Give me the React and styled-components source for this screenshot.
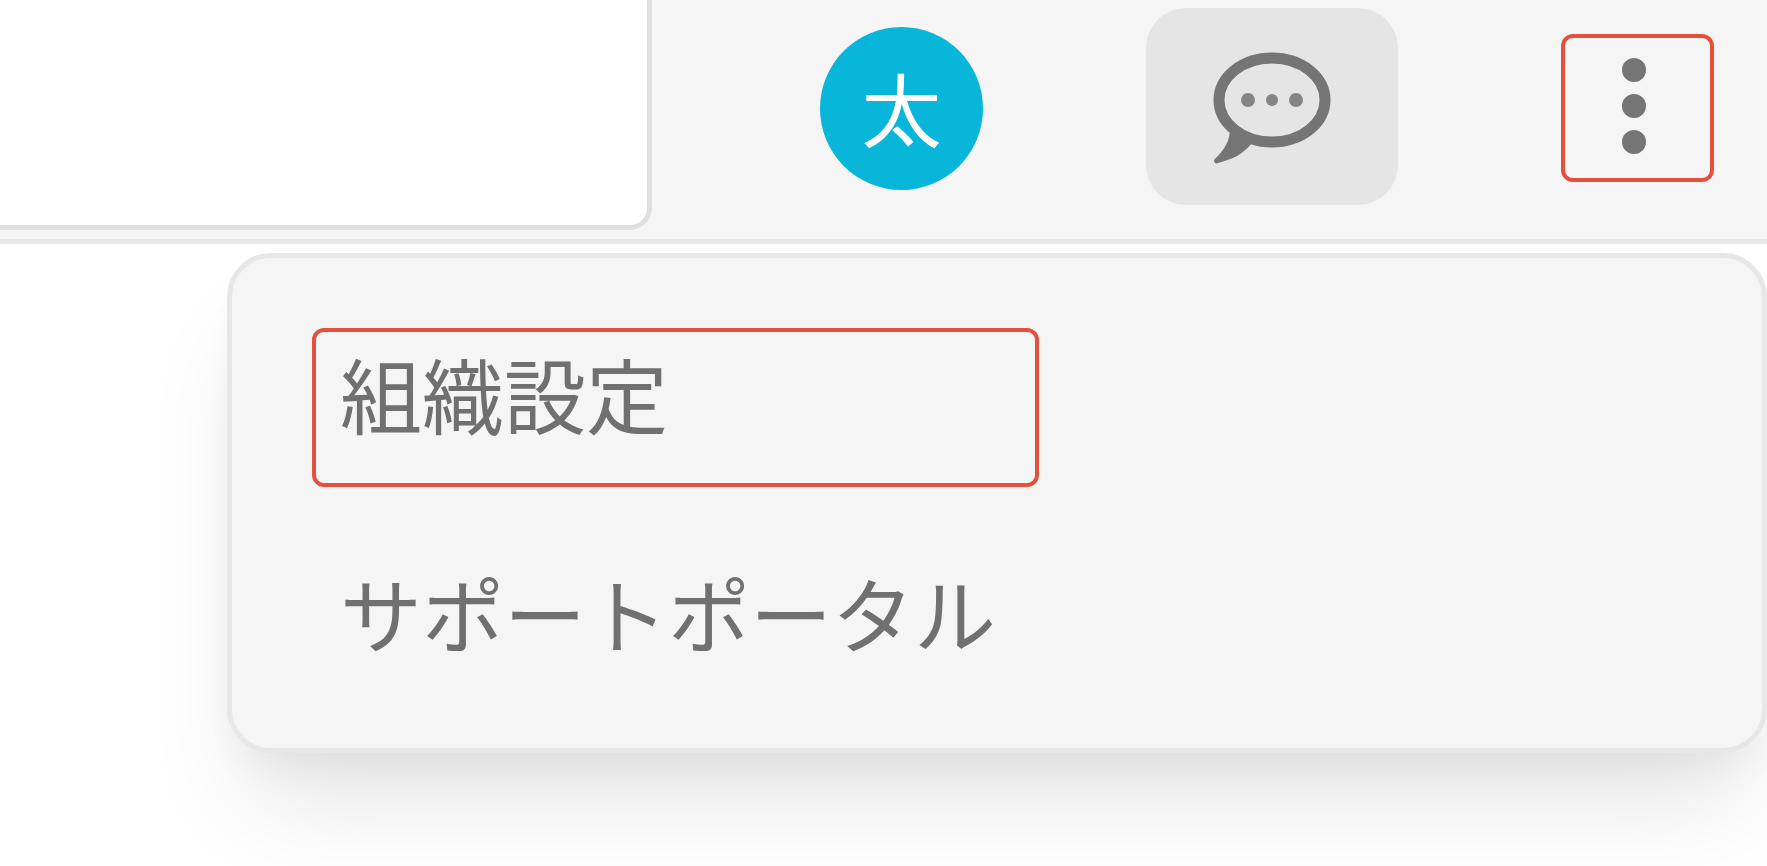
import styled, { createGlobalStyle } from 'styled-components';

const menuItems = [
  { label: '組織設定', href: '#organization', highlighted: true },
  { label: 'サポートポータル', href: '#support', highlighted: false },
];

const ChatIcon = () => (
  <svg width='124' height='116' viewBox='0 0 124 116' aria-hidden='true'>
    <ellipse
      cx='62'
      cy='52'
      rx='53'
      ry='42'
      fill='none'
      stroke='#757575'
      strokeWidth='11'
    />
    <path d='M20 80 C20 93 15 101 4 112 C4 115 6 116 8 115 C22 111 34 107 44 92 Z' fill='#757575' />
    <circle cx='38' cy='52' r='7' fill='#858585' />
    <circle cx='62' cy='52' r='6' fill='#858585' />
    <circle cx='86' cy='52' r='7' fill='#858585' />
  </svg>
);

const KebabIcon = () => (
  <svg width='24' height='96' viewBox='0 0 24 96' aria-hidden='true'>
    <circle cx='12' cy='12' r='12' fill='#757575' />
    <circle cx='12' cy='48' r='12' fill='#757575' />
    <circle cx='12' cy='84' r='12' fill='#757575' />
  </svg>
);

const App = () => {
  return (
    <SPage>
      <GlobalStyle />
      <SHeader>
        <SSearch type='text' aria-label='検索' />
        <SActions>
          <SAvatar type='button'>太</SAvatar>
          <SChatButton type='button' aria-label='チャット'>
            <ChatIcon />
          </SChatButton>
          <SMenuButton type='button' aria-label='メニュー'>
            <KebabIcon />
          </SMenuButton>
        </SActions>
        <SMenu>
          {menuItems.map((item) => (
            <SMenuItem
              key={item.label}
              href={item.href}
              $highlighted={item.highlighted}
            >
              {item.label}
            </SMenuItem>
          ))}
        </SMenu>
      </SHeader>
    </SPage>
  );
};

export default App;

const GlobalStyle = createGlobalStyle`
  * {
    box-sizing: border-box;
  }

  body {
    margin: 0;
    background-color: #ffffff;
    font-family: 'Noto Sans CJK JP', sans-serif;
  }

  button {
    font-family: inherit;
    cursor: pointer;
  }
`;

const SPage = styled.div`
  min-height: 100vh;
  overflow: hidden;
`;

const SHeader = styled.header`
  position: relative;
  display: flex;
  align-items: flex-start;
  column-gap: 168px;
  padding-right: 53px;
  background-color: #f5f5f5;
  border-bottom: 5px solid #e7e7e7;
`;

const SSearch = styled.input`
  flex: 1;
  min-width: 0;
  height: 250px;
  margin: -20px 0 9px;
  padding: 0 24px;
  border: 5px solid #e0e0e0;
  border-left: none;
  border-radius: 0 22px 22px 0;
  background-color: #ffffff;
  font-size: 82px;
  color: #707070;
  outline: none;
`;

const SActions = styled.div`
  display: flex;
  align-items: center;
  column-gap: 163px;
  height: 216px;
`;

const SAvatar = styled.button`
  display: flex;
  justify-content: center;
  align-items: center;
  width: 163px;
  height: 163px;
  padding: 0 0 4px;
  border: none;
  border-radius: 50%;
  background-color: #08b6d9;
  color: #ffffff;
  font-size: 80px;
  line-height: 120px;
`;

const SChatButton = styled.button`
  display: flex;
  justify-content: center;
  align-items: center;
  width: 252px;
  height: 197px;
  margin-bottom: 4px;
  padding: 0;
  border: none;
  border-radius: 40px;
  background-color: #e5e5e5;
`;

const SMenuButton = styled.button`
  display: flex;
  justify-content: center;
  align-items: center;
  width: 153px;
  height: 148px;
  padding: 0 8px 4px 0;
  border: 4px solid #e5503c;
  border-radius: 12px;
  background-color: transparent;
`;

const SMenu = styled.nav`
  position: absolute;
  top: 253px;
  left: 227px;
  right: 0;
  display: flex;
  flex-direction: column;
  align-items: flex-start;
  row-gap: 60px;
  padding: 70px 80px 42px;
  border: 5px solid #e7e7e7;
  border-radius: 44px;
  background-color: #f5f5f5;
  box-shadow:
    0 68px 102px -20px rgba(0, 0, 0, 0.1),
    0 27px 41px -14px rgba(0, 0, 0, 0.05);
`;

const SMenuItem = styled.a`
  width: 727px;
  max-width: 100%;
  padding: 1px 24px 30px;
  border: 4px solid ${({ $highlighted }) => ($highlighted ? '#e5503c' : 'transparent')};
  border-radius: 12px;
  color: #707070;
  font-size: 82px;
  line-height: 120px;
  text-decoration: none;
  white-space: nowrap;
`;
